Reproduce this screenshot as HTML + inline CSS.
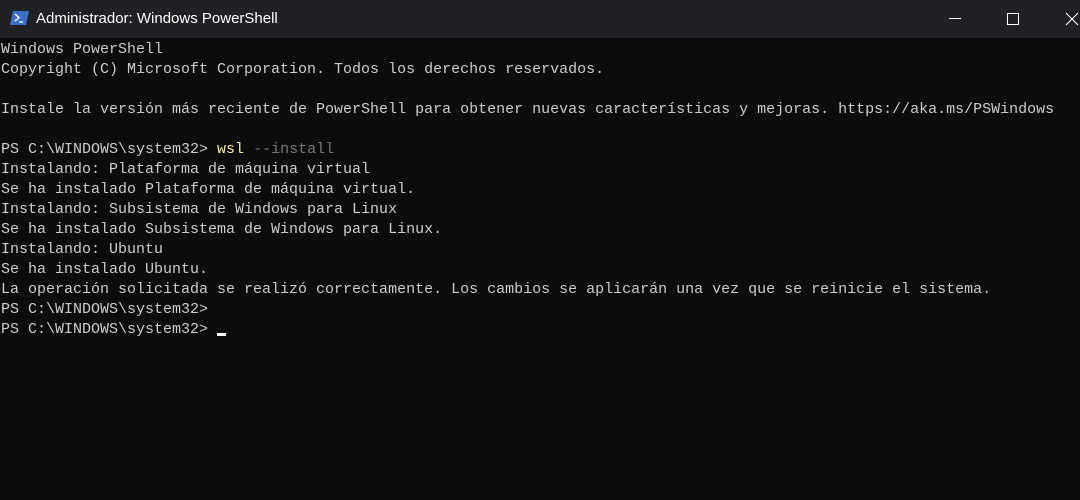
<!DOCTYPE html>
<html><head><meta charset="utf-8"><style>
html,body{margin:0;padding:0;width:1080px;height:500px;overflow:hidden;background:#0c0c0c;}
.tb{position:absolute;left:0;top:0;width:1080px;height:38px;background:#202124;}
.title{position:absolute;left:36px;top:10px;font:15px "Liberation Sans",sans-serif;color:#fff;}
.icon{position:absolute;left:10px;top:11px;width:19px;height:14px;}
pre{position:absolute;left:1px;top:40px;margin:0;font:15px/20px "Liberation Mono",monospace;color:#cccccc;}
.y{color:#f9f1a5}.g{color:#767676}
.cur{display:inline-block;width:9px;height:3px;background:#fff;vertical-align:-3px;}
</style></head><body>
<div class="tb">
<svg class="icon" viewBox="0 0 19 14"><polygon points="3,0 19,0 16,14 0,14" fill="#3b6fc7"/><path d="M5 3 L9 6.5 L5 10" stroke="#fff" stroke-width="1.4" fill="none"/><path d="M9 11 H13" stroke="#fff" stroke-width="1.3"/></svg>
<div class="title">Administrador: Windows PowerShell</div>
<svg style="position:absolute;left:940px;top:12px" width="100" height="16">
<line x1="9" y1="6.5" x2="21" y2="6.5" stroke="#fff" stroke-width="1"/>
<rect x="67.5" y="1.5" width="11" height="11" stroke="#fff" fill="none" stroke-width="1"/>
</svg>
<svg style="position:absolute;left:1064px;top:12px" width="16" height="16"><path d="M2 1 L14 13 M14 1 L2 13" stroke="#fff" stroke-width="1"/></svg>
</div>
<pre>Windows PowerShell
Copyright (C) Microsoft Corporation. Todos los derechos reservados.

Instale la versión más reciente de PowerShell para obtener nuevas características y mejoras. https://aka.ms/PSWindows

PS C:\WINDOWS\system32&gt; <span class="y">wsl</span> <span class="g">--install</span>
Instalando: Plataforma de máquina virtual
Se ha instalado Plataforma de máquina virtual.
Instalando: Subsistema de Windows para Linux
Se ha instalado Subsistema de Windows para Linux.
Instalando: Ubuntu
Se ha instalado Ubuntu.
La operación solicitada se realizó correctamente. Los cambios se aplicarán una vez que se reinicie el sistema.
PS C:\WINDOWS\system32&gt;
PS C:\WINDOWS\system32&gt; <span class="cur"></span></pre>
</body></html>
